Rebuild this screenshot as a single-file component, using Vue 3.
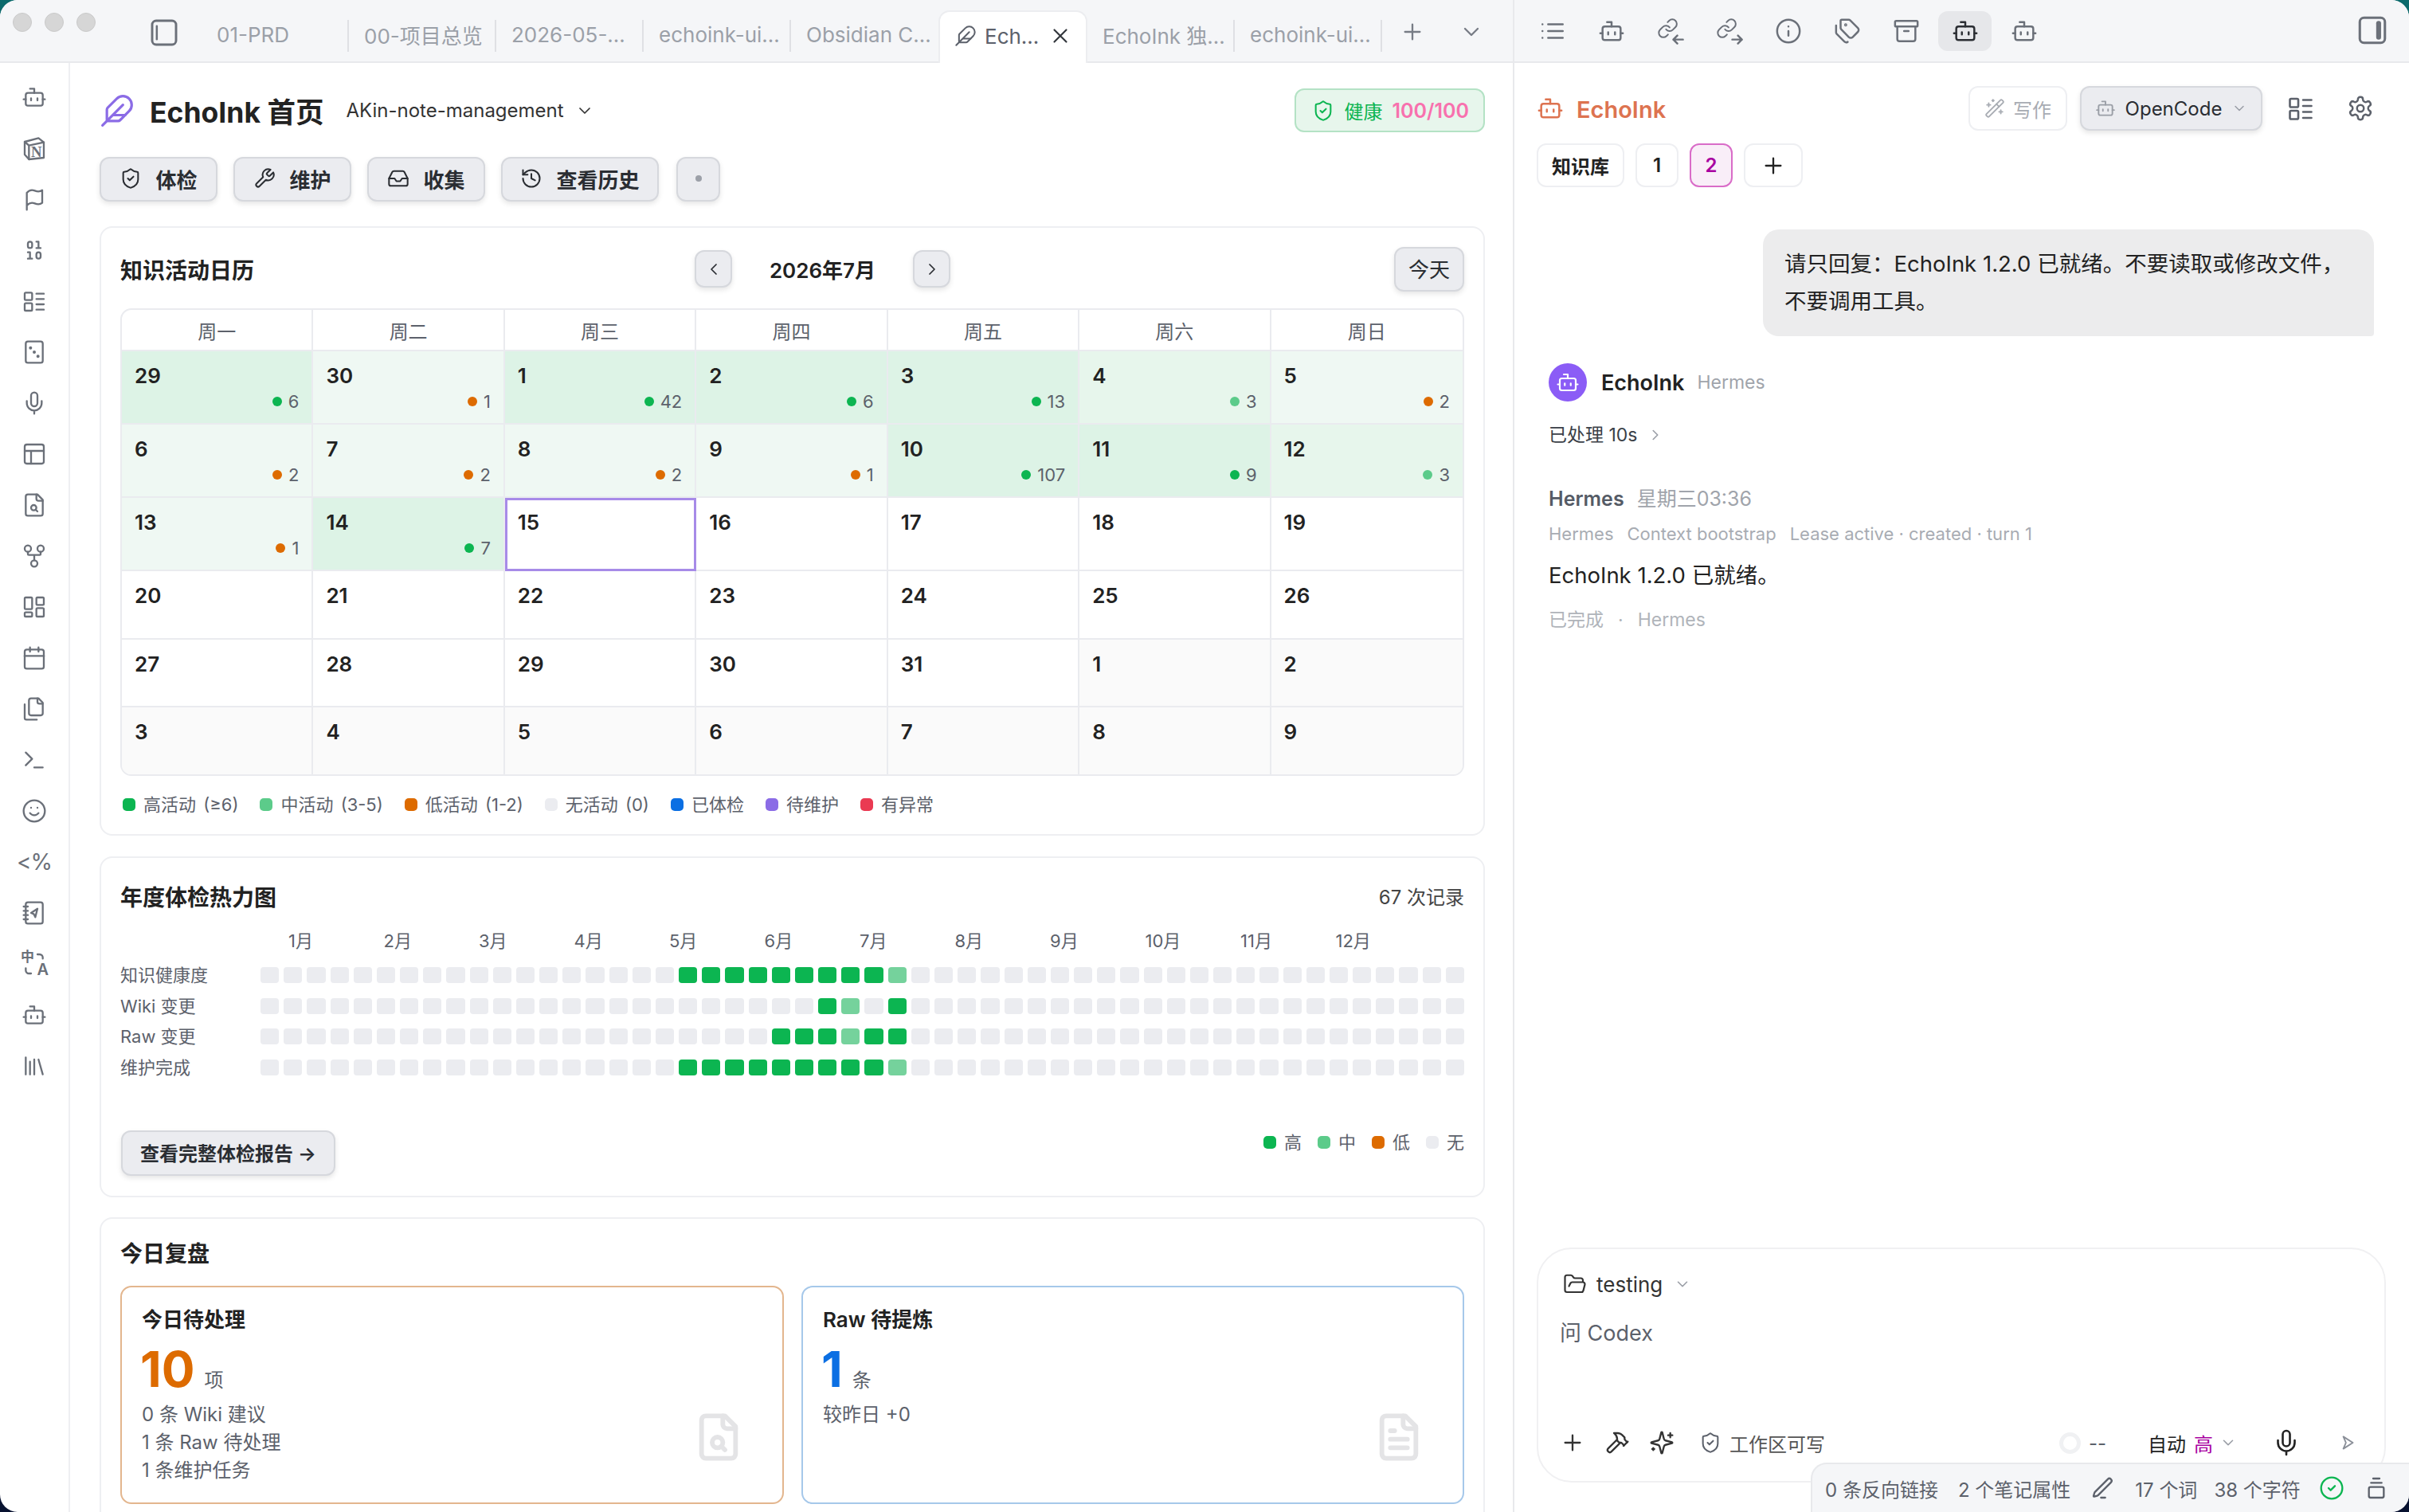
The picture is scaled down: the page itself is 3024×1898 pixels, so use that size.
<template>
  <div class="desktop">
    <div class="window">
      <header class="topbar">
        <div class="tabbar">
          <div class="lights"><i></i><i></i><i></i></div>
          <Icon name="sidebarL" class="sb-toggle" />
          <div class="tabs">
            <template v-for="tab in tabs" :key="tab.label">
              <div class="tab" :class="{ active: tab.active, nosep: tab.nosep }">
                <Icon v-if="tab.active" name="feather" class="tab-ic" />
                <span>{{ tab.label }}</span>
                <Icon v-if="tab.active" name="x" class="tab-x" />
              </div>
            </template>
          </div>
          <Icon name="plus" class="tab-plus" />
          <Icon name="chevDown" class="tab-chev" />
        </div>
        <div class="sidebar-tabs">
          <span v-for="ic in sideIcons" :key="ic.id" class="st-btn" :class="{ on: ic.on }">
            <Icon :name="ic.name" />
          </span>
          <Icon name="sidebarR" class="sb-toggle-r" />
        </div>
      </header>

      <div class="body">
        <nav class="ribbon">
          <template v-for="r in ribbon" :key="r.id">
            <span v-if="r.text" class="rb-text">{{ r.text }}</span>
            <span v-else-if="r.lang" class="rb-lang">
              <Icon name="langArcs" />
              <b>中</b>
              <b>A</b>
            </span>
            <Icon v-else :name="r.name" />
          </template>
        </nav>

        <main class="main">
          <div class="page-head">
            <Icon name="feather" class="logo" />
            <h1>EchoInk 首页</h1>
            <span class="vault">AKin-note-management</span>
            <Icon name="chevDown" class="vault-chev" />
            <div class="health">
              <Icon name="shield" />
              <span>健康</span>
              <b>100/100</b>
            </div>
          </div>

          <div class="actions">
            <button v-for="a in actions" :key="a.label" class="btn">
              <Icon :name="a.icon" />{{ a.label }}
            </button>
            <button class="btn dot-btn"><i></i></button>
          </div>

          <section class="card cal-card">
            <div class="cal-head">
              <h2>知识活动日历</h2>
              <div class="cal-nav">
                <button class="btn nav"><Icon name="chevLeft" /></button>
                <strong>2026年7月</strong>
                <button class="btn nav"><Icon name="chevRight" /></button>
              </div>
              <button class="btn today-btn">今天</button>
            </div>
            <div class="cal">
              <div v-for="w in weekdays" :key="w" class="wd">{{ w }}</div>
              <div
                v-for="(d, i) in days"
                :key="i"
                class="day"
                :class="[d.level, { today: d.today, other: d.other, short: i >= 21, lastcol: i % 7 === 6, lastrow: i >= 35 }]"
              >
                <span class="num">{{ d.n }}</span>
                <span v-if="d.count" class="count"><i :class="d.level"></i>{{ d.count }}</span>
              </div>
            </div>
            <div class="legend">
              <span v-for="l in calLegend" :key="l.label"><i :style="{ background: l.color }"></i>{{ l.label }}</span>
            </div>
          </section>

          <section class="card heat-card">
            <div class="heat-head">
              <h2>年度体检热力图</h2>
              <span>67 次记录</span>
            </div>
            <div class="months">
              <span v-for="m in 12" :key="m">{{ m }}月</span>
            </div>
            <div class="heat">
              <template v-for="row in heatRows" :key="row.label">
                <span class="heat-label">{{ row.label }}</span>
                <div class="cells">
                  <i v-for="(c, i) in row.cells" :key="i" :class="c"></i>
                </div>
              </template>
            </div>
            <div class="heat-foot">
              <button class="btn report">查看完整体检报告 →</button>
              <div class="heat-legend">
                <span v-for="l in heatLegend" :key="l.label"><i :style="{ background: l.color }"></i>{{ l.label }}</span>
              </div>
            </div>
          </section>

          <section class="card review-card">
            <h2>今日复盘</h2>
            <div class="review-grid">
              <div class="rv orange">
                <h3>今日待处理</h3>
                <p class="big"><b>10</b><span>项</span></p>
                <p class="line">0 条 Wiki 建议</p>
                <p class="line">1 条 Raw 待处理</p>
                <p class="line">1 条维护任务</p>
                <Icon name="fileSearch" class="rv-ic" />
              </div>
              <div class="rv blue">
                <h3>Raw 待提炼</h3>
                <p class="big"><b>1</b><span>条</span></p>
                <p class="line">较昨日 +0</p>
                <Icon name="fileText" class="rv-ic" />
              </div>
            </div>
          </section>
        </main>

        <aside class="side">
          <div class="side-head">
            <Icon name="bot" class="brand-ic" />
            <span class="brand">EchoInk</span>
            <button class="write"><Icon name="wand" />写作</button>
            <button class="btn agent"><Icon name="bot" class="agent-ic" /><span>OpenCode</span><Icon name="chevDown" class="agent-chev" /></button>
            <Icon name="listTodo" class="head-ic" />
            <Icon name="gear" class="head-ic" />
          </div>
          <div class="chips">
            <span class="chip">知识库</span>
            <span class="chip num-chip">1</span>
            <span class="chip num-chip cur">2</span>
            <span class="chip add"><Icon name="plus" /></span>
          </div>

          <div class="bubble">请只回复：EchoInk 1.2.0 已就绪。不要读取或修改文件，不要调用工具。</div>

          <div class="msg-head">
            <span class="avatar"><Icon name="bot" /></span>
            <b>EchoInk</b>
            <span>Hermes</span>
          </div>
          <div class="processed">已处理 10s<Icon name="chevRight" /></div>
          <div class="who"><b>Hermes</b><span>星期三03:36</span></div>
          <div class="meta"><span>Hermes</span><span>Context bootstrap</span><span>Lease active · created · turn 1</span></div>
          <div class="answer">EchoInk 1.2.0 已就绪。</div>
          <div class="done">已完成<i>·</i>Hermes</div>

          <div class="composer">
            <div class="folder"><Icon name="folder" /><span>testing</span><Icon name="chevDown" class="mini-chev" /></div>
            <div class="placeholder">问 Codex</div>
            <div class="tools">
              <Icon name="plus" class="t-ic" />
              <Icon name="hammer" class="t-ic" />
              <Icon name="sparkle" class="t-ic" />
              <Icon name="shield" class="t-shield" />
              <span class="perm">工作区可写</span>
              <span class="ring"></span>
              <span class="dash">--</span>
              <span class="auto">自动</span>
              <span class="hi">高</span>
              <Icon name="chevDown" class="mini-chev" />
              <Icon name="mic" class="t-mic" />
              <Icon name="send" class="t-send" />
            </div>
          </div>
        </aside>
      </div>

      <footer class="status">
        <span>0 条反向链接</span>
        <span>2 个笔记属性</span>
        <Icon name="pencil" class="s-pen" />
        <span class="s-words">17 个词</span>
        <span class="s-chars">38 个字符</span>
        <Icon name="check" class="s-check" />
        <Icon name="stack" class="s-stack" />
      </footer>
    </div>
  </div>
</template>

<script setup>
import { h } from 'vue'

const linkG = '<g transform="scale(.8)"><path d="M10 13a5 5 0 0 0 7.54.54l3-3a5 5 0 0 0-7.07-7.07l-1.72 1.71"/><path d="M14 11a5 5 0 0 0-7.54-.54l-3 3a5 5 0 0 0 7.07 7.07l1.71-1.71"/></g>'

const paths = {
  bot: '<path d="M12 8V4H8"/><rect x="4" y="8" width="16" height="12" rx="2"/><path d="M2 14h2M20 14h2M15 13v2M9 13v2"/>',
  notion: '<path d="M3 6 16 2.5l5 4V21L7 22.5 3 18z"/><path d="M3 6l4 3.5L21 6.5M7 9.5v13"/><text x="14" y="20" text-anchor="middle" font-size="14" font-weight="700" font-family="Liberation Serif, serif" fill="currentColor" stroke="none">N</text>',
  flag: '<path d="M5 22V6c2.5-3 5-3 7.5-2s4.5 1.5 7-.5v12c-2.5 2-4.500 1.500-7 .5S7.500 15 5 18"/>',
  binary: '<rect x="14" y="14" width="4" height="6" rx="2"/><rect x="6" y="4" width="4" height="6" rx="2"/><path d="M6 20h4M14 10h4M6 14h2v6M14 4h2v6"/>',
  listTodo: '<rect x="3" y="4" width="7" height="7" rx="1"/><rect x="3" y="14" width="7" height="7" rx="1"/><path d="M14 5h7M14 10h7M14 15h7M14 20h7"/>',
  dice: '<rect x="4" y="2" width="16" height="20" rx="2"/><path d="M8.5 8h.01M12 12h.01M15.5 16h.01" stroke-width="3"/>',
  mic: '<path d="M12 19v3M19 10v2a7 7 0 0 1-14 0v-2"/><rect x="9" y="2" width="6" height="13" rx="3"/>',
  layout: '<rect x="3" y="3" width="18" height="18" rx="2"/><path d="M3 9h18M9 21V9"/>',
  fileSearch: '<path d="M14 2v4a2 2 0 0 0 2 2h4"/><path d="M15 2H6a2 2 0 0 0-2 2v16a2 2 0 0 0 2 2h12a2 2 0 0 0 2-2V7z"/><circle cx="11.5" cy="14.5" r="2.5"/><path d="M13.3 16.3 15 18"/>',
  fileText: '<path d="M14 2v4a2 2 0 0 0 2 2h4"/><path d="M15 2H6a2 2 0 0 0-2 2v16a2 2 0 0 0 2 2h12a2 2 0 0 0 2-2V7z"/><path d="M10 9H8M16 13H8M16 17H8"/>',
  fork: '<circle cx="12" cy="19" r="3"/><circle cx="6" cy="5" r="3"/><circle cx="18" cy="5" r="3"/><path d="M18 8v2c0 .6-.4 1-1 1H7c-.6 0-1-.4-1-1V8M12 11v5"/>',
  dash: '<rect x="3" y="3" width="7" height="11" rx="1"/><rect x="14" y="3" width="7" height="7" rx="1"/><rect x="14" y="13" width="7" height="8" rx="1"/><rect x="3" y="17" width="7" height="4" rx="1"/>',
  calendar: '<path d="M8 2v4M16 2v4"/><rect x="3" y="4" width="18" height="18" rx="2"/><path d="M3 10h18"/>',
  files: '<path d="M20 7h-3a2 2 0 0 1-2-2V2"/><path d="M9 18a2 2 0 0 1-2-2V4a2 2 0 0 1 2-2h7l4 4v10a2 2 0 0 1-2 2Z"/><path d="M3 7.6v12.8A1.6 1.6 0 0 0 4.6 22h9.8"/>',
  terminal: '<path d="m4 17 6-6-6-6M12 19h8"/>',
  smile: '<circle cx="12" cy="12" r="10"/><path d="M8 14s1.5 2 4 2 4-2 4-2M9 9h.01M15 9h.01"/>',
  journal: '<rect x="4" y="2" width="16" height="20" rx="2"/><path d="M2 6h4M2 10h4M2 14h4M2 18h4M15 8l-2 8-1.5-3-2.5-1z"/>',
  langArcs: '<path d="M15 3h2a3 3 0 0 1 3 3v1M4 16v2a3 3 0 0 0 3 3h2"/>',
  library: '<path d="m16 6 4 14M12 6v14M8 8v12M4 4v16"/>',
  shield: '<path d="M20 13c0 5-3.5 7.5-7.66 8.95a1 1 0 0 1-.67-.01C7.5 20.5 4 18 4 13V6a1 1 0 0 1 1-1c2 0 4.5-1.2 6.24-2.72a1.17 1.17 0 0 1 1.52 0C14.51 3.81 17 5 19 5a1 1 0 0 1 1 1z"/><path d="m9 12 2 2 4-4"/>',
  wrench: '<path d="M14.7 6.3a1 1 0 0 0 0 1.4l1.6 1.6a1 1 0 0 0 1.4 0l3.77-3.77a6 6 0 0 1-7.94 7.94l-6.91 6.91a2.12 2.12 0 0 1-3-3l6.91-6.91a6 6 0 0 1 7.94-7.94l-3.76 3.76z"/>',
  inbox: '<path d="M22 12h-6l-2 3h-4l-2-3H2"/><path d="M5.45 5.11 2 12v6a2 2 0 0 0 2 2h16a2 2 0 0 0 2-2v-6l-3.45-6.89A2 2 0 0 0 16.76 4H7.24a2 2 0 0 0-1.79 1.11z"/>',
  history: '<path d="M3 12a9 9 0 1 0 9-9 9.75 9.75 0 0 0-6.74 2.74L3 8"/><path d="M3 3v5h5M12 7v5l4 2"/>',
  feather: '<path d="M12.67 19a2 2 0 0 0 1.416-.588l6.154-6.172a6 6 0 0 0-8.49-8.49L5.586 9.914A2 2 0 0 0 5 11.328V18a1 1 0 0 0 1 1z"/><path d="M16 8 2 22M17.5 15H9"/>',
  list: '<path d="M3 12h.01M3 18h.01M3 6h.01M8 12h13M8 18h13M8 6h13"/>',
  linkIn: linkG + '<path d="m18 16-3.5 3.5L18 23M14.5 19.5H23"/>',
  linkOut: linkG + '<path d="m19.5 16 3.5 3.5-3.5 3.5M14.5 19.5H23"/>',
  info: '<circle cx="12" cy="12" r="10"/><path d="M12 16v-4M12 8h.01"/>',
  tags: '<path d="M13.172 2a2 2 0 0 1 1.414.586l6.71 6.71a2.4 2.4 0 0 1 0 3.408l-4.592 4.592a2.4 2.4 0 0 1-3.408 0l-6.71-6.71A2 2 0 0 1 6 9.172V3a1 1 0 0 1 1-1z"/><path d="M2 7v6.172a2 2 0 0 0 .586 1.414l6.71 6.71a2.4 2.4 0 0 0 3.01.3"/><circle cx="10.5" cy="6.5" r=".5"/>',
  archive: '<rect x="2" y="3" width="20" height="5" rx="1"/><path d="M4 8v11a2 2 0 0 0 2 2h12a2 2 0 0 0 2-2V8M10 12h4"/>',
  gear: '<path d="M12.22 2h-.44a2 2 0 0 0-2 2v.18a2 2 0 0 1-1 1.73l-.43.25a2 2 0 0 1-2 0l-.15-.08a2 2 0 0 0-2.73.73l-.22.38a2 2 0 0 0 .73 2.73l.15.1a2 2 0 0 1 1 1.72v.51a2 2 0 0 1-1 1.74l-.15.09a2 2 0 0 0-.73 2.73l.22.38a2 2 0 0 0 2.73.73l.15-.08a2 2 0 0 1 2 0l.43.25a2 2 0 0 1 1 1.73V20a2 2 0 0 0 2 2h.44a2 2 0 0 0 2-2v-.18a2 2 0 0 1 1-1.73l.43-.25a2 2 0 0 1 2 0l.15.08a2 2 0 0 0 2.73-.73l.22-.39a2 2 0 0 0-.73-2.73l-.15-.08a2 2 0 0 1-1-1.74v-.5a2 2 0 0 1 1-1.74l.15-.09a2 2 0 0 0 .73-2.73l-.22-.38a2 2 0 0 0-2.73-.73l-.15.08a2 2 0 0 1-2 0l-.43-.25a2 2 0 0 1-1-1.73V4a2 2 0 0 0-2-2z"/><circle cx="12" cy="12" r="3"/>',
  wand: '<path d="m21.64 3.64-1.28-1.28a1.21 1.21 0 0 0-1.72 0L2.36 18.64a1.21 1.21 0 0 0 0 1.72l1.28 1.28a1.2 1.2 0 0 0 1.72 0L21.64 5.36a1.2 1.2 0 0 0 0-1.72"/><path d="m14 7 3 3M5 6v4M19 14v4M10 2v2M7 8H3M21 16h-4M11 3H9"/>',
  folder: '<path d="m6 14 1.5-2.9A2 2 0 0 1 9.24 10H20a2 2 0 0 1 1.94 2.5l-1.54 6a2 2 0 0 1-1.95 1.5H4a2 2 0 0 1-2-2V5a2 2 0 0 1 2-2h3.9a2 2 0 0 1 1.69.9l.81 1.2a2 2 0 0 0 1.67.9H18a2 2 0 0 1 2 2v2"/>',
  hammer: '<path d="m15 12-8.373 8.373a1 1 0 1 1-3-3L12 9"/><path d="m18 15 4-4"/><path d="m21.5 11.5-1.914-1.914A2 2 0 0 1 19 8.172V7l-2.26-2.26a6 6 0 0 0-4.202-1.756L9 2.96l.92.82A6.18 6.18 0 0 1 12 8.4V10l2 2h1.172a2 2 0 0 1 1.414.586L18.5 14.5"/>',
  sparkle: '<path d="M9.937 15.5A2 2 0 0 0 8.5 14.063l-6.135-1.582a.5.5 0 0 1 0-.962L8.5 9.936A2 2 0 0 0 9.937 8.5l1.582-6.135a.5.5 0 0 1 .963 0L14.063 8.5A2 2 0 0 0 15.5 9.937l6.135 1.581a.5.5 0 0 1 0 .964L15.5 14.063a2 2 0 0 0-1.437 1.437l-1.582 6.135a.5.5 0 0 1-.963 0z"/><path d="M20 3v4M22 5h-4M4 17v2M5 18H3"/>',
  pencil: '<path d="M16.376 3.622a1 1 0 0 1 3.002 3.002L7.368 18.635a2 2 0 0 1-.855.506l-2.872.838a.5.5 0 0 1-.62-.62l.838-2.872a2 2 0 0 1 .506-.854z"/><path d="M10 21h4"/>',
  check: '<circle cx="12" cy="12" r="10"/><path d="m9 12 2 2 4-4"/>',
  send: '<path d="m7 5 11 7-11 7 3-7z"/>',
  stack: '<path d="M9 3h6M7 7h10"/><rect x="5" y="11" width="14" height="10" rx="1.5"/>',
  plus: '<path d="M5 12h14M12 5v14"/>',
  x: '<path d="M18 6 6 18M6 6l12 12"/>',
  chevDown: '<path d="m6 9 6 6 6-6"/>',
  chevLeft: '<path d="m15 18-6-6 6-6"/>',
  chevRight: '<path d="m9 18 6-6-6-6"/>',
  sidebarL: '<rect x="3" y="3" width="18" height="18" rx="3"/><path d="M6.5 7v10" stroke-width="1.5"/>',
  sidebarR: '<rect x="3" y="3" width="18" height="18" rx="3"/><path d="M16.5 7v10" stroke-width="3.5"/>'
}

const Icon = (props) =>
  h('svg', {
    class: 'ic',
    viewBox: '0 0 24 24',
    fill: 'none',
    stroke: 'currentColor',
    'stroke-width': 1.75,
    'stroke-linecap': 'round',
    'stroke-linejoin': 'round',
    innerHTML: paths[props.name]
  })
Icon.props = ['name']

const tabs = [
  { label: '01-PRD' },
  { label: '00-项目总览' },
  { label: '2026-05-…' },
  { label: 'echoink-ui…' },
  { label: 'Obsidian C…', nosep: true },
  { label: 'Ech…', active: true, nosep: true },
  { label: 'EchoInk 独…' },
  { label: 'echoink-ui…' }
]

const sideIcons = [
  { id: 1, name: 'list' },
  { id: 2, name: 'bot' },
  { id: 3, name: 'linkIn' },
  { id: 4, name: 'linkOut' },
  { id: 5, name: 'info' },
  { id: 6, name: 'tags' },
  { id: 7, name: 'archive' },
  { id: 8, name: 'bot', on: true },
  { id: 9, name: 'bot' }
]

const ribbon = [
  { id: 1, name: 'bot' },
  { id: 2, name: 'notion' },
  { id: 3, name: 'flag' },
  { id: 4, name: 'binary' },
  { id: 5, name: 'listTodo' },
  { id: 6, name: 'dice' },
  { id: 7, name: 'mic' },
  { id: 8, name: 'layout' },
  { id: 9, name: 'fileSearch' },
  { id: 10, name: 'fork' },
  { id: 11, name: 'dash' },
  { id: 12, name: 'calendar' },
  { id: 13, name: 'files' },
  { id: 14, name: 'terminal' },
  { id: 15, name: 'smile' },
  { id: 16, text: '<%' },
  { id: 17, name: 'journal' },
  { id: 18, lang: true },
  { id: 19, name: 'bot' },
  { id: 20, name: 'library' }
]

const actions = [
  { label: '体检', icon: 'shield' },
  { label: '维护', icon: 'wrench' },
  { label: '收集', icon: 'inbox' },
  { label: '查看历史', icon: 'history' }
]

const weekdays = ['周一', '周二', '周三', '周四', '周五', '周六', '周日']

const activity = [
  [29, 'high', 6], [30, 'low', 1], [1, 'high', 42], [2, 'high', 6], [3, 'high', 13], [4, 'mid', 3], [5, 'low', 2],
  [6, 'low', 2], [7, 'low', 2], [8, 'low', 2], [9, 'low', 1], [10, 'high', 107], [11, 'high', 9], [12, 'mid', 3],
  [13, 'low', 1], [14, 'high', 7]
]
const days = activity.map(([n, level, count]) => ({ n, level, count }))
days.push({ n: 15, today: true })
for (let n = 16; n <= 31; n++) days.push({ n })
for (let n = 1; n <= 9; n++) days.push({ n, other: true })

const calLegend = [
  { label: '高活动 (≥6)', color: '#0cb551' },
  { label: '中活动 (3-5)', color: '#5ccb8a' },
  { label: '低活动 (1-2)', color: '#dd6b00' },
  { label: '无活动 (0)', color: '#ebecf0' },
  { label: '已体检', color: '#0b6fe3' },
  { label: '待维护', color: '#8b6ce6' },
  { label: '有异常', color: '#ea3a52' }
]

const heatLegend = [
  { label: '高', color: '#0cb551' },
  { label: '中', color: '#5ccb8a' },
  { label: '低', color: '#dd6b00' },
  { label: '无', color: '#ebecf0' }
]

const makeCells = (high, mid) =>
  Array.from({ length: 52 }, (_, i) => (high.includes(i) ? 'h' : mid.includes(i) ? 'm' : ''))
const range = (a, b) => Array.from({ length: b - a + 1 }, (_, i) => a + i)

const heatRows = [
  { label: '知识健康度', cells: makeCells(range(18, 26), [27]) },
  { label: 'Wiki 变更', cells: makeCells([24, 27], [25]) },
  { label: 'Raw 变更', cells: makeCells([22, 23, 24, 26, 27], [25]) },
  { label: '维护完成', cells: makeCells(range(18, 26), [27]) }
]
</script>

<style>
html, body { margin: 0; padding: 0; background: #0a1530; }
</style>

<style scoped>
.desktop { width: 3024px; height: 1898px; background: linear-gradient(#0b6a6c 0, #0a3a4c 40%, #081230 100%); overflow: hidden; }
.window { position: relative; width: 3024px; height: 1898px; border-radius: 22px; overflow: hidden; background: #fff; display: flex; flex-direction: column; font-family: Inter, "Noto Sans CJK SC", sans-serif; color: #222; font-size: 26px; }
.ic { width: 32px; height: 32px; flex: none; display: block; }
button { font-family: inherit; }

.topbar { height: 79px; flex: none; display: flex; background: #f5f6f8; border-bottom: 2px solid #e8e9ec; box-sizing: border-box; }
.tabbar { width: 1901px; flex: none; display: flex; align-items: flex-start; border-right: 2px solid #e8e9ec; box-sizing: border-box; }
.lights { display: flex; gap: 16px; margin: 16px 0 0 16px; }
.lights i { width: 24px; height: 24px; border-radius: 50%; background: #d6d6d6; border: 1px solid #c9c9c9; box-sizing: border-box; }
.sb-toggle { margin: 21px 0 0 66px; width: 40px; height: 40px; color: #6b7079; }
.tabs { display: flex; margin: 13px 0 0 27px; height: 64px; }
.tab { position: relative; width: 185px; box-sizing: border-box; padding: 0 0 4px 19px; display: flex; align-items: center; font-size: 26px; color: #9ba0a8; white-space: nowrap; }
.tab::after { content: ""; position: absolute; right: 0; top: 12px; height: 40px; width: 2px; background: #dfe0e4; }
.tab.nosep::after { display: none; }
.tab.active { width: 187px; background: #fff; color: #5c616b; border-radius: 14px 14px 0 0; border: 2px solid #ecedf0; border-bottom: none; height: 66px; padding-left: 18px; }
.tab-ic { width: 28px; height: 28px; margin-right: 10px; }
.tab-x { width: 30px; height: 30px; margin-left: 12px; color: #33373d; }
.tab-plus { margin: 24px 0 0 22px; color: #777c85; }
.tab-chev { margin: 24px 0 0 42px; color: #777c85; }

.sidebar-tabs { flex: 1; display: flex; align-items: flex-start; padding: 14px 0 0 14px; position: relative; }
.st-btn { width: 67px; height: 50px; margin-right: 7px; display: flex; align-items: center; justify-content: center; border-radius: 12px; color: #6b7079; }
.st-btn .ic { width: 34px; height: 34px; }
.st-btn.on { background: #e6e7ea; color: #2b2e33; }
.sb-toggle-r { margin: 3px 0 0 auto; margin-right: 25px; width: 42px; height: 42px; color: #6b7079; }

.body { flex: 1; min-height: 0; display: flex; }
.ribbon { width: 88px; flex: none; box-sizing: border-box; border-right: 2px solid #eeeff2; padding-top: 27px; display: flex; flex-direction: column; align-items: center; gap: 32px; color: #6b7079; }
.rb-text { height: 32px; line-height: 32px; font-size: 28px; color: #6b7079; letter-spacing: -1px; }
.rb-lang { position: relative; width: 32px; height: 32px; display: block; }
.rb-lang b { position: absolute; left: -1px; top: -3px; font-size: 17px; line-height: 20px; font-weight: 700; }
.rb-lang b:last-of-type { left: auto; right: -2px; top: auto; bottom: -2px; font-size: 20px; line-height: 22px; font-weight: 600; }

.main { width: 1813px; flex: none; box-sizing: border-box; padding: 32px 35px 0 37px; overflow: hidden; border-right: 2px solid #e8e9ec; }
.page-head { display: flex; align-items: center; height: 55px; }
.logo { width: 44px; height: 44px; color: #8b6ce6; margin-right: 19px; }
h1 { margin: 0; font-size: 35.5px; font-weight: 700; margin-right: 28px; color: #222; }
.vault { font-size: 24px; color: #333; }
.vault-chev { width: 24px; height: 24px; margin-left: 14px; color: #333; }
.health { margin-left: auto; display: flex; align-items: center; height: 55px; box-sizing: border-box; padding: 0 18px 0 20px; border: 2px solid #b4e2c5; border-radius: 12px; background: #e7f6ec; color: #0cb551; font-size: 24px; }
.health .ic { width: 28px; height: 28px; margin-right: 12px; }
.health b { color: #f871ae; font-weight: 600; font-size: 25px; margin-left: 12px; }

.actions { display: flex; gap: 20px; margin: 31px 0 31px; }
.btn { display: flex; align-items: center; justify-content: center; height: 56px; box-sizing: border-box; padding: 0 26px 2px; border: 2px solid #d6d8dd; border-radius: 12px; background: #ebecf0; font-size: 26px; font-weight: 600; color: #2a2d32; box-shadow: 0 3px 6px rgba(0, 0, 0, 0.1); }
.actions .btn { width: 148px; padding: 0 0 2px; }
.actions .btn:nth-child(4) { width: 198px; }
.actions .ic { width: 28px; height: 28px; margin-right: 17px; }
.actions .dot-btn { width: 55px; margin-left: 2px; }
.dot-btn i { width: 8px; height: 8px; border-radius: 50%; background: #9ca0a8; }

.card { border: 2px solid #eeeff2; border-radius: 16px; padding: 24px; box-sizing: border-box; margin-bottom: 26px; }
h2 { margin: 0; font-size: 28px; font-weight: 600; color: #222; }

.cal-head { position: relative; height: 55px; display: flex; align-items: center; justify-content: space-between; margin-bottom: 22px; }
.cal-nav { position: absolute; left: 721px; display: flex; align-items: center; }
.cal-nav strong { width: 227px; text-align: center; font-size: 26px; font-weight: 600; }
.btn.nav { width: 47px; height: 47px; padding: 0; }
.nav .ic { width: 24px; height: 24px; }
.today-btn { width: 88px; padding: 0 0 2px; font-weight: 400; height: 56px; }

.cal { display: grid; grid-template-columns: repeat(7, 1fr); border: 2px solid #eaebef; border-radius: 14px; overflow: hidden; }
.wd { height: 52px; display: flex; align-items: center; justify-content: center; font-size: 24px; color: #5c616b; border-right: 2px solid #eaebef; border-bottom: 2px solid #eaebef; box-sizing: border-box; }
.wd:nth-child(7) { border-right: none; }
.day { position: relative; height: 92px; box-sizing: border-box; border-right: 2px solid #eaebef; border-bottom: 2px solid #eaebef; padding: 13px 0 0 16px; }
.day.short { height: 85.5px; }
.day.lastcol { border-right: none; }
.day.lastrow { border-bottom: none; height: 84px; }
.day.high { background: #ddf3e6; }
.day.mid { background: #e7f6ec; }
.day.low { background: #eff8f3; }
.day.other { background: #fafafa; }
.day.today { border: 3px solid #a78be8; padding: 10px 0 0 13px; }
.num { font-size: 26px; font-weight: 600; line-height: 36px; color: #222; display: block; }
.count { position: absolute; right: 16px; bottom: 13px; display: flex; align-items: center; gap: 8px; font-size: 22px; line-height: 28px; color: #5c616b; }
.count i { width: 12px; height: 12px; border-radius: 50%; }
.count i.high { background: #0cb551; }
.count i.mid { background: #5ccb8a; }
.count i.low { background: #dd6b00; }

.legend { display: flex; gap: 27px; margin-top: 24px; padding: 0 0 1px 3px; font-size: 22px; line-height: 24px; color: #5c616b; word-spacing: 3px; }
.legend span { display: flex; align-items: center; }
.legend i { width: 16px; height: 16px; border-radius: 5px; margin-right: 10px; }

.heat-card { margin-bottom: 25px; padding-bottom: 25px; }
.heat-head { display: flex; justify-content: space-between; align-items: center; height: 47px; }
.heat-head span { font-size: 24px; color: #444; }
.months { display: flex; margin: 18px 0 0 211px; height: 30px; }
.months span { width: 119.5px; flex: none; font-size: 22px; line-height: 30px; color: #5c616b; }
.heat { display: grid; grid-template-columns: 176px 1fr; row-gap: 18.7px; margin-top: 18px; }
.heat-label { font-size: 22px; line-height: 20px; color: #5c616b; white-space: nowrap; }
.cells { display: grid; grid-template-columns: repeat(52, 1fr); column-gap: 6px; }
.cells i { height: 20px; border-radius: 4px; background: #ebecf0; }
.cells i.h { background: #0cb551; }
.cells i.m { background: #75d29c; }
.heat-foot { display: flex; justify-content: space-between; align-items: flex-start; margin-top: 69px; padding-left: 1px; }
.report { width: 269px; height: 57px; padding: 0 0 2px; font-size: 24px; }
.heat-legend { display: flex; gap: 20px; font-size: 22px; line-height: 30px; color: #5c616b; }
.heat-legend span { display: flex; align-items: center; }
.heat-legend i { width: 16px; height: 16px; border-radius: 5px; margin-right: 10px; }

.review-card h2 { line-height: 36px; margin-top: 2px; }
.review-grid { display: grid; grid-template-columns: 833px 832px; column-gap: 22px; margin-top: 22px; }
.rv { position: relative; height: 274px; box-sizing: border-box; border: 2px solid; border-radius: 14px; padding: 24px 25px 0; }
.rv.orange { border-color: #e3b68e; }
.rv.blue { border-color: #a6c8ea; }
h3 { margin: 0; font-size: 26px; font-weight: 600; line-height: 34px; color: #222; }
.big { margin: 15px 0 0; display: flex; align-items: baseline; height: 60px; line-height: 60px; }
.big b { font-size: 62px; font-weight: 700; margin-left: -2px; }
.orange .big b { color: #dd6b00; }
.blue .big b { color: #0b6fe3; }
.big span { margin-left: 12px; font-size: 24px; color: #5c616b; }
.line { margin: 0; font-size: 24px; line-height: 35px; color: #5c616b; }
.big + .line { margin-top: 9px; }
.rv-ic { position: absolute; right: 48px; top: 156px; width: 64px; height: 64px; color: #e4e4e6; stroke-width: 2.2; }

.side { flex: 1; min-width: 0; box-sizing: border-box; padding: 29px 0 37px 28px; display: flex; flex-direction: column; }
.side-head { display: flex; align-items: center; height: 56px; padding-right: 44px; }
.brand-ic { width: 34px; height: 34px; color: #dd7350; margin-right: 16px; }
.brand { font-size: 29px; font-weight: 600; color: #dd7350; padding-top: 2px; }
.write { margin-left: auto; width: 124px; height: 56px; display: flex; align-items: center; justify-content: center; gap: 10px; background: #fff; border: 2px solid #eeeff2; border-radius: 12px; font-size: 24px; color: #a8acb3; }
.write .ic { width: 26px; height: 26px; }
.agent { width: 229px; margin-left: 16px; padding: 0; font-size: 24px; font-weight: 400; gap: 12px; }
.agent-ic { width: 26px; height: 26px; color: #9a9ea6; }
.agent-chev { width: 20px; height: 20px; color: #9a9ea6; }
.head-ic { margin-left: 30px; width: 36px; height: 36px; color: #5c616b; }
.head-ic:last-child { margin-left: 40px; width: 34px; height: 34px; }
.chips { display: flex; gap: 14px; margin-top: 16px; }
.chip { height: 55px; box-sizing: border-box; border: 2px solid #eeeff2; border-radius: 12px; display: flex; align-items: center; justify-content: center; font-size: 24px; font-weight: 600; color: #222; width: 110px; }
.chip.num-chip { width: 54px; }
.chip.cur { background: #f9eef8; border-color: #d96cc8; color: #a800a0; }
.chip.add { width: 74px; }
.bubble { width: 767px; box-sizing: border-box; margin: 53px 0 34px 284px; padding: 20px 26px 20px 27px; background: #ececed; border-radius: 20px 20px 4px 20px; font-size: 27.5px; line-height: 47px; color: #222; }
.msg-head { display: flex; align-items: center; margin-left: 15px; height: 48px; }
.avatar { width: 48px; height: 48px; border-radius: 50%; background: #8b5cf6; display: flex; align-items: center; justify-content: center; color: #fff; margin-right: 18px; }
.avatar .ic { width: 30px; height: 30px; }
.msg-head b { font-size: 27px; font-weight: 600; margin-right: 16px; }
.msg-head span:last-child { font-size: 23px; color: #a0a4ab; }
.processed { display: flex; align-items: center; margin: 27px 0 0 15px; font-size: 23px; line-height: 30px; color: #3a3f47; }
.processed .ic { width: 22px; height: 22px; margin-left: 12px; color: #9a9ea6; }
.who { margin: 50px 0 0 15px; line-height: 30px; font-size: 25px; }
.who b { font-weight: 600; color: #555b66; margin-right: 16px; }
.who span { color: #a0a4ab; }
.meta { margin: 14px 0 0 15px; line-height: 30px; font-size: 22px; color: #a8acb3; display: flex; gap: 17px; }
.answer { margin: 17px 0 0 15px; font-size: 27.5px; line-height: 40px; color: #222; }
.done { margin: 21px 0 0 15px; font-size: 23px; line-height: 30px; color: #b0b4ba; }
.done i { font-style: normal; margin: 0 18px; }

.composer { margin-top: auto; width: 1066px; height: 295px; box-sizing: border-box; border: 2px solid #f0f0f2; border-radius: 44px; padding: 26px 33px 0 27px; display: flex; flex-direction: column; }
.folder { display: flex; align-items: center; height: 36px; padding-left: 2px; font-size: 26px; color: #333; }
.folder .ic { width: 30px; height: 30px; margin: 0 12px 0 2px; }
.folder .mini-chev { width: 22px; height: 22px; margin: 0 0 0 14px; }
.mini-chev { width: 22px; height: 22px; color: #9a9ea6; margin-left: 8px; }
.placeholder { margin-top: 22px; font-size: 27px; line-height: 44px; color: #5c616b; }
.tools { margin-top: auto; margin-bottom: 26px; display: flex; align-items: center; height: 44px; }
.t-ic { width: 32px; height: 32px; margin-right: 24px; color: #333; }
.t-shield { width: 28px; height: 28px; margin: 0 10px 0 7px; color: #5c616b; }
.perm { font-size: 24px; color: #555; }
.ring { width: 27px; height: 27px; box-sizing: border-box; border: 5px solid #f0f1f3; border-radius: 50%; margin-left: auto; }
.dash { font-size: 24px; color: #5c616b; margin: 0 52px 0 10px; }
.auto { font-size: 24px; color: #222; }
.hi { font-size: 24px; color: #a800a0; margin-left: 10px; }
.t-mic { margin-left: 44px; width: 36px; height: 36px; color: #222; }
.t-send { margin-left: 46px; width: 26px; height: 26px; color: #8a8f98; }

.status { position: absolute; right: 0; bottom: 0; width: 751px; height: 62px; box-sizing: border-box; display: flex; align-items: center; padding-left: 16px; background: #f5f6f8; border-top: 2px solid #e8e9ec; border-left: 2px solid #e8e9ec; border-top-left-radius: 20px; font-size: 24px; color: #5c616b; white-space: nowrap; }
.status span { margin-right: 25px; }
.status .s-words { margin-right: 21px; }
.status .s-chars { margin-right: 23px; }
.s-pen { margin: 0 24px 0 0; width: 32px; height: 32px; }
.s-check { width: 32px; height: 32px; color: #0cb551; margin: 0 24px 0 0; }
.s-stack { width: 32px; height: 32px; }
</style>
